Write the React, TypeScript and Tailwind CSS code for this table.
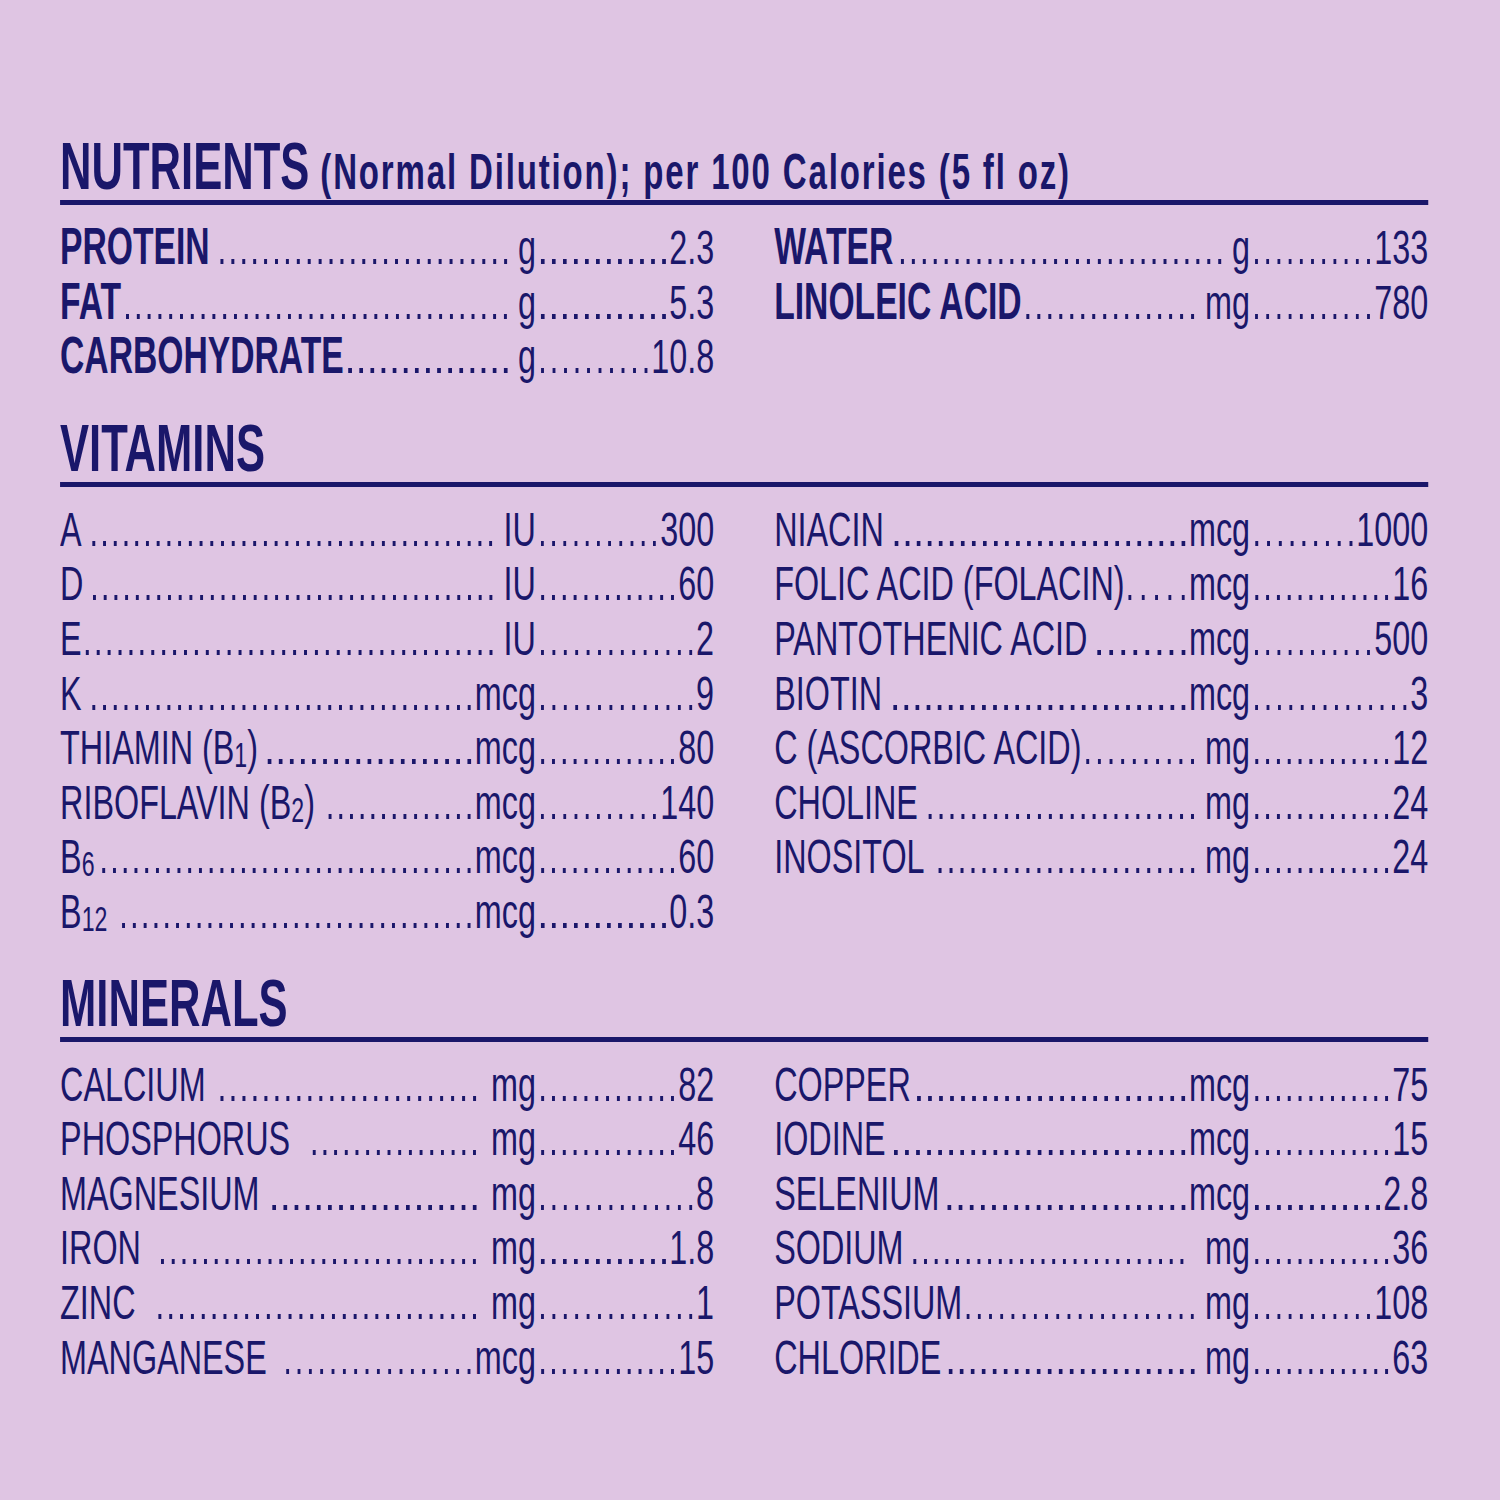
import React from "react";

const S = 0.66;

type Row = { label: React.ReactNode; unit: string; value: string; lg?: number; ug?: number };

const Sub = ({ children }: { children: React.ReactNode }) => (
  <span className="relative top-[3px] text-[35px]">{children}</span>
);

function Dots({ left, right }: { left: number; right: number }) {
  return (
    <span
      className="mb-[1px] h-[5px] min-w-0 flex-1 bg-[linear-gradient(to_right,transparent_5.6px,#1a176a_5.6px,#1a176a_10.6px,transparent_10.6px)] [background-repeat:space] [background-size:16.2px_5px]"
      style={{ marginLeft: left, marginRight: right }}
    />
  );
}

const u = (scaled: number) => Math.max(0, (scaled - 4) / S);

function Line({ row, bold }: { row: Row; bold?: boolean }) {
  const isMcg = row.unit === "mcg";
  const ug = row.ug ?? (isMcg ? 3 : 11);
  return (
    <div className="flex h-[54.6px] w-[991px] items-baseline whitespace-nowrap text-[49px] leading-[54.6px]">
      <div className="flex w-[721px] shrink-0 items-baseline">
        <span className={bold ? "shrink-0 text-[51px] font-bold" : "shrink-0"}>{row.label}</span>
        <Dots left={u(row.lg ?? 11)} right={u(ug)} />
        <span className="shrink-0">{row.unit}</span>
      </div>
      <Dots left={u(5)} right={u(4)} />
      <span className="shrink-0">{row.value}</span>
    </div>
  );
}

function Section({
  title,
  extra,
  left,
  right,
  bold,
  className,
}: {
  title: string;
  extra?: string;
  left: Row[];
  right: Row[];
  bold?: boolean;
  className?: string;
}) {
  return (
    <section className={className}>
      <h2 className="h-[67px] whitespace-nowrap text-[66px] font-bold leading-[67px]">
        {title}
        {extra && <span className="text-[50px] leading-none tracking-[2.8px]"> {extra}</span>}
      </h2>
      <div className="h-[5px] w-[2073px] bg-[#1a176a]" />
      <div className="mt-[15px] grid grid-cols-[991px_991px] gap-x-[91px]">
        <div className="flex flex-col">
          {left.map((r, i) => (
            <Line key={i} row={r} bold={bold} />
          ))}
        </div>
        <div className="flex flex-col">
          {right.map((r, i) => (
            <Line key={i} row={r} bold={bold} />
          ))}
        </div>
      </div>
    </section>
  );
}

export default function App() {
  const nutL: Row[] = [
    { label: "PROTEIN", unit: "g", value: "2.3", lg: 11 },
    { label: "FAT", unit: "g", value: "5.3", lg: 5 },
    { label: "CARBOHYDRATE", unit: "g", value: "10.8", lg: 5 },
  ];
  const nutR: Row[] = [
    { label: "WATER", unit: "g", value: "133", lg: 8 },
    { label: "LINOLEIC ACID", unit: "mg", value: "780", lg: 5 },
  ];
  const vitL: Row[] = [
    { label: "A", unit: "IU", value: "300", lg: 11 },
    { label: "D", unit: "IU", value: "60", lg: 10 },
    { label: "E", unit: "IU", value: "2", lg: 4 },
    { label: "K", unit: "mcg", value: "9", lg: 11 },
    { label: <>THIAMIN (B<Sub>1</Sub>)</>, unit: "mcg", value: "80", lg: 10 },
    { label: <>RIBOFLAVIN (B<Sub>2</Sub>)</>, unit: "mcg", value: "140", lg: 14 },
    { label: <>B<Sub>6</Sub></>, unit: "mcg", value: "60", lg: 8 },
    { label: <>B<Sub>12</Sub></>, unit: "mcg", value: "0.3", lg: 15 },
  ];
  const vitR: Row[] = [
    { label: "NIACIN", unit: "mcg", value: "1000", lg: 11 },
    { label: "FOLIC ACID (FOLACIN)", unit: "mcg", value: "16", lg: 4 },
    { label: "PANTOTHENIC ACID", unit: "mcg", value: "500", lg: 10 },
    { label: "BIOTIN", unit: "mcg", value: "3", lg: 12 },
    { label: "C (ASCORBIC ACID)", unit: "mg", value: "12", lg: 5 },
    { label: "CHOLINE", unit: "mg", value: "24", lg: 11 },
    { label: "INOSITOL", unit: "mg", value: "24", lg: 14 },
  ];
  const minL: Row[] = [
    { label: "CALCIUM", unit: "mg", value: "82", lg: 15, ug: 15 },
    { label: "PHOSPHORUS", unit: "mg", value: "46", lg: 23, ug: 15 },
    { label: "MAGNESIUM", unit: "mg", value: "8", lg: 13, ug: 15 },
    { label: "IRON", unit: "mg", value: "1.8", lg: 20, ug: 15 },
    { label: "ZINC", unit: "mg", value: "1", lg: 23, ug: 15 },
    { label: "MANGANESE", unit: "mcg", value: "15", lg: 20 },
  ];
  const minR: Row[] = [
    { label: "COPPER", unit: "mcg", value: "75", lg: 7 },
    { label: "IODINE", unit: "mcg", value: "15", lg: 9 },
    { label: "SELENIUM", unit: "mcg", value: "2.8", lg: 8 },
    { label: "SODIUM", unit: "mg", value: "36", lg: 10, ug: 22 },
    { label: "POTASSIUM", unit: "mg", value: "108", lg: 5 },
    { label: "CHLORIDE", unit: "mg", value: "63", lg: 8 },
  ];

  return (
    <div className="h-[1500px] w-[1500px] overflow-hidden bg-[#dfc5e3]">
      <div className="w-[2273px] origin-top-left scale-x-[0.66] pl-[91px] pt-[133px] font-['Liberation_Sans',Arial,sans-serif] text-[#1a176a]">
        <Section
          title="NUTRIENTS"
          extra="(Normal Dilution); per 100 Calories (5 fl oz)"
          left={nutL}
          right={nutR}
          bold
        />
        <Section title="VITAMINS" left={vitL} right={vitR} className="mt-[31px]" />
        <Section title="MINERALS" left={minL} right={minR} className="mt-[31px]" />
      </div>
    </div>
  );
}
